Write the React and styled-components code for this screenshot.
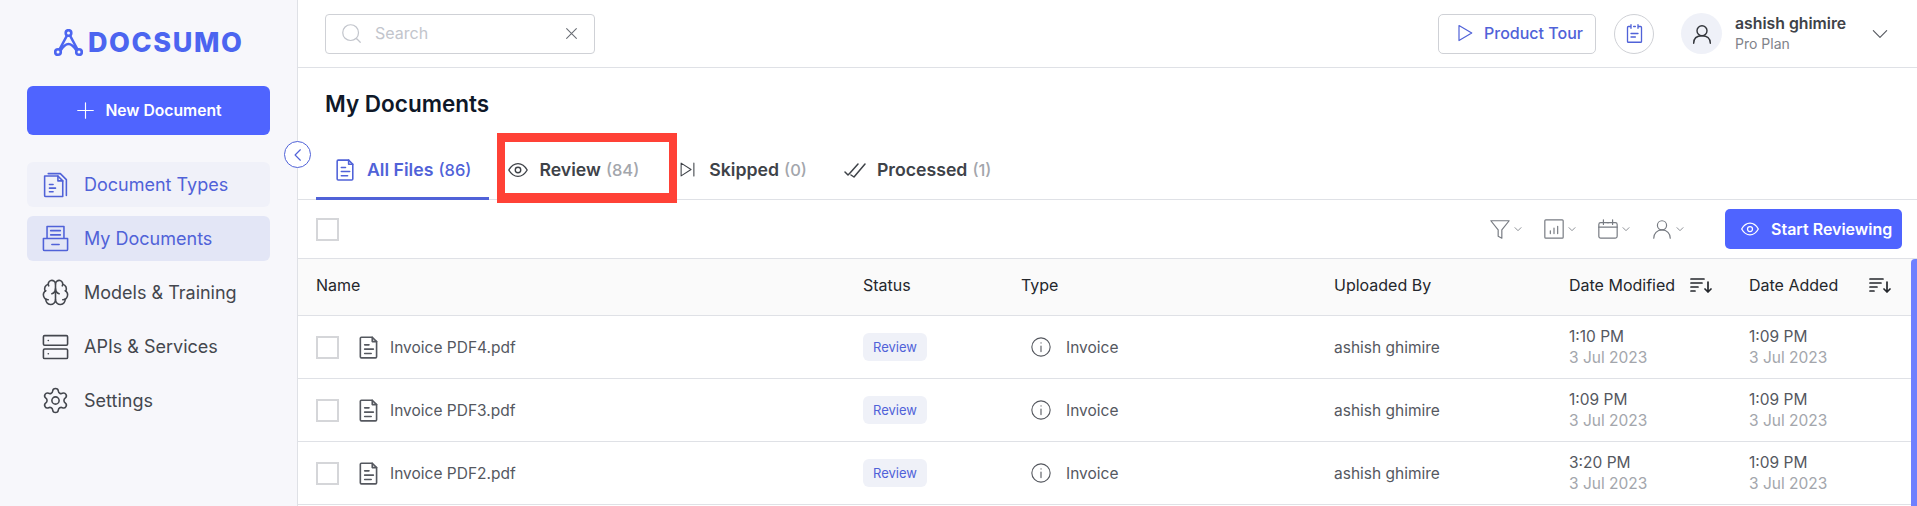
import React from "react";
import styled, { createGlobalStyle } from "styled-components";
import { Brain, Settings } from "lucide-react";

const Global = createGlobalStyle`
  html, body { margin: 0; padding: 0; background: #fff; height: 506px; overflow: hidden; }
  body { font-family: Inter, "Liberation Sans", sans-serif; color: #3e4248; }
  * { box-sizing: border-box; }
`;

const Shell = styled.div`display: flex; width: 1917px; height: 506px; overflow: hidden;`;
const Sidebar = styled.aside`
  width: 298px; flex: none; background: #f7f7fb; border-right: 1px solid #dfe1e6;
  padding: 29px 27px 0; display: flex; flex-direction: column; position: relative;
`;
const Logo = styled.div`
  display: flex; align-items: center; gap: 5px; height: 28px; padding-left: 27px; color: #4c65f0;
`;
const LogoText = styled.span`
  font: 800 27px/28px Inter, sans-serif; letter-spacing: 1.6px;
`;
const NewButton = styled.button`
  margin-top: 29px; height: 49px; width: 243px; border: 0; border-radius: 6px; background: #4f64ff; color: #fff;
  font: 600 15.7px Inter, sans-serif; display: flex; align-items: center; justify-content: center; gap: 11px; padding: 0 0 0 2px;
`;
const Nav = styled.nav`margin-top: 27px; display: flex; flex-direction: column; gap: 9px;`;
const NavItem = styled.div`
  height: 45px; border-radius: 6px; display: flex; align-items: center; gap: 14px; padding-left: 14px;
  font-size: 18px; font-weight: 400;
  color: ${p => (p.$state ? "#5062d8" : "#44474e")};
  background: ${p => (p.$state === "active" ? "#e3e6f6" : p.$state === "soft" ? "#f0f1f9" : "transparent")};
`;
const Collapse = styled.button`
  position: absolute; left: 284px; top: 141px; width: 27px; height: 27px; border-radius: 50%; padding: 0;
  background: #fff; border: 1px solid #5062d8; color: #5062d8; display: flex; align-items: center; justify-content: center;
`;

const Main = styled.main`flex: 1; min-width: 0; display: flex; flex-direction: column; position: relative;`;
const Topbar = styled.header`
  height: 68px; flex: none; border-bottom: 1px solid #dfe1e6; display: flex; align-items: center;
  padding: 0 29px 0 27px; gap: 18px;
`;
const Search = styled.div`
  width: 270px; height: 40px; border: 1px solid #cfd1d6; border-radius: 4px; display: flex; align-items: center;
  padding: 0 16px 1px 15px; color: #c2c5cc; font-size: 16px; gap: 13px; margin-right: auto;
`;
const SearchLabel = styled.span`flex: 1;`;
const ClearIcon = styled.span`display: flex; color: #6b6f76;`;
const TourButton = styled.button`
  width: 158px; height: 40px; border: 1px solid #cfd1d6; border-radius: 5px; background: #fff; color: #5062d8;
  font: 500 16px Inter, sans-serif; display: flex; align-items: center; gap: 10px; padding: 0 0 1px 17px;
`;
const RoundIcon = styled.div`
  width: 40px; height: 40px; border-radius: 50%; border: 1px solid #cfd1d6; color: #5062d8;
  display: flex; align-items: center; justify-content: center;
`;
const User = styled.div`display: flex; align-items: center; margin-left: 9px;`;
const Avatar = styled.div`
  width: 41px; height: 41px; border-radius: 50%; background: #eff1f8; color: #33363c;
  display: flex; align-items: center; justify-content: center; margin-right: 13px;
`;
const UserText = styled.div`display: flex; flex-direction: column; width: 137px;`;
const UserName = styled.span`font-size: 15.8px; font-weight: 600; line-height: 20px; color: #3e4248;`;
const UserPlan = styled.span`font-size: 14px; line-height: 20px; color: #7f838a;`;
const UserChevron = styled.span`display: flex; color: #55585f;`;

const Title = styled.h1`
  margin: 0; padding: 21px 0 0 27px; height: 65px; font-size: 22.5px; font-weight: 600; line-height: 30px; color: #0f1828; flex: none;
`;
const Tabs = styled.div`
  height: 67px; flex: none; border-bottom: 1px solid #dfe1e6; display: flex; align-items: stretch; padding-left: 18px; position: relative;
`;
const Tab = styled.div`
  display: flex; align-items: center; gap: ${p => p.$gap || 9}px; padding: 9px 18px 0 ${p => p.$pad || 17}px; height: 67px; font-size: 17.7px; font-weight: 600;
  color: ${p => (p.$active ? "#5062d8" : "#3e4248")};
  border-bottom: 3px solid ${p => (p.$active ? "#5062d8" : "transparent")};
`;
const TabLabel = styled.span`display: flex; align-items: baseline; gap: 5px;`;
const Count = styled.span`
  font-size: 16.5px; font-weight: 500; color: ${p => (p.$active ? "#5062d8" : "#a3a6ac")};
`;
const Highlight = styled.div`
  position: absolute; left: 199px; top: 0; width: 180px; height: 70px; border: solid #ff4136;
  border-width: 9px 8px 10px; pointer-events: none;
`;
const Toolbar = styled.div`
  height: 58px; flex: none; display: flex; align-items: center; padding: 0 15px 0 18px;
`;
const Check = styled.span`
  width: 23px; height: 23px; flex: none; border: 2px solid #d5d6d9; display: block; background: #fff;
`;
const Tools = styled.div`margin-left: auto; display: flex; align-items: center; gap: 21px; margin-right: 41px;`;
const Tool = styled.div`display: flex; align-items: center; gap: 3px; color: #777b82;`;
const StartButton = styled.button`
  width: 177px; height: 40px; border: 0; border-radius: 5px; background: #4f64ff; color: #fff; font: 600 16px Inter, sans-serif;
  display: flex; align-items: center; gap: 11px; padding: 0 0 0 15px;
`;
const GridRow = styled.div`
  display: grid; grid-template-columns: 547px 158px 313px 235px 180px 1fr; align-items: center; padding-left: 18px;
  border-top: ${p => (p.$header ? "1px solid #dfe1e6" : "0")};
  border-bottom: 1px solid #dfe1e6; height: ${p => (p.$header ? "58px" : "63px")};
  padding-bottom: ${p => (p.$header ? "5px" : "0")};
  background: ${p => (p.$header ? "#fafafa" : "#fff")};
  font-size: 16px; color: ${p => (p.$header ? "#24272c" : "#55585f")};
`;
const HeadCell = styled.div`display: flex; align-items: center; font-weight: 400; gap: ${p => p.$gap || 0}px; color: #24272c;`;
const NameCell = styled.div`display: flex; align-items: center; font-size: 15.5px;`;
const FileIcon = styled.span`display: flex; margin: 0 8px 0 17px; color: #55585f;`;
const Pill = styled.span`
  width: 64px; height: 28px; border-radius: 6px; background: #eff1f8; color: #5062d8; font-size: 13px;
  display: flex; align-items: center; justify-content: center;
`;
const TypeCell = styled.div`display: flex; align-items: center; gap: 14px; padding-left: 9px; font-size: 15.5px; color: #55585f;`;
const DateCell = styled.div`display: flex; flex-direction: column; line-height: 21px; font-size: 15.5px;`;
const DateSub = styled.span`color: #a3a6ac;`;
const Scroll = styled.div`
  position: absolute; right: 0; top: 259px; bottom: 0; width: 6px; background: #6f80ff; border-radius: 4px 0 0 0;
`;

const Svg = ({ s = 20, w, h, sw = 1.5, children, fill = "none", vb }) => (
  <svg width={w || s} height={h || s} viewBox={vb || "0 0 24 24"} fill={fill} stroke="currentColor" strokeWidth={sw} strokeLinecap="round" strokeLinejoin="round">{children}</svg>
);
const Doc = (p) => <Svg {...p}><path d="M5 3h10l4 4v14a1 1 0 0 1-1 1H5a1 1 0 0 1-1-1V4a1 1 0 0 1 1-1z" /><path d="M15 3v4h4M8 10h4M8 14h8M8 18h6" /></Svg>;
const Eye = (p) => <Svg {...p}><path d="M2 12c2.5-4.5 6-7 10-7s7.5 2.5 10 7c-2.5 4.5-6 7-10 7s-7.5-2.5-10-7z" /><circle cx="12" cy="12" r="3" /></Svg>;
const Person = (p) => <Svg {...p}><circle cx="12" cy="8" r="5" /><path d="M3 22c0-5 3.5-9 9-9s9 4 9 9" /></Svg>;
const Chev = ({ s = 8 }) => <Svg s={s} sw={2.5}><path d="M3 8l9 9 9-9" /></Svg>;
const SortI = () => (
  <Svg w={23} h={16} vb="0 0 23 16" sw={1.7}><path d="M1 2h13M1 6h11M1 10h7M1 14h4M18 5v10M15 12l3 3 3-3" /></Svg>
);

const rows = [
  ["Invoice PDF4.pdf", "1:10 PM"],
  ["Invoice PDF3.pdf", "1:09 PM"],
  ["Invoice PDF2.pdf", "3:20 PM"],
];

export default function App() {
  return (
    <Shell>
      <Global />
      <Sidebar>
        <Logo>
          <svg width="29" height="28" viewBox="0 0 29 28" fill="none" stroke="currentColor" strokeWidth="2.6">
            <circle cx="14.5" cy="4" r="2.8" /><circle cx="4" cy="23" r="2.8" /><circle cx="25" cy="23" r="2.8" />
            <path d="M13 6.5L5.5 20.5M16 6.5l7.5 14M6.5 21.5c3-4.5 5-6.5 8-6.5s5 2 8 6.5" />
          </svg>
          <LogoText>DOCSUMO</LogoText>
        </Logo>
        <NewButton>
          <Svg s={17} sw={1.6}><path d="M12 1v22M1 12h22" /></Svg>
          New Document
        </NewButton>
        <Nav>
          <NavItem $state="soft">
            <Svg s={29} sw={1.3}><path d="M3 5h11l4 4v13H4a1 1 0 0 1-1-1V5z" /><path d="M14 5v4h4M7 12h3M7 15h5M7 18h3M6 3h10l5 5v13" /></Svg>
            Document Types
          </NavItem>
          <NavItem $state="active">
            <Svg s={29} sw={1.3}><path d="M5 2h14v10H5zM2 12h20v9a1 1 0 0 1-1 1H3a1 1 0 0 1-1-1zM8 5.5h8M8 9h8M9 17h6" /></Svg>
            My Documents
          </NavItem>
          <NavItem>
            <Brain size={29} strokeWidth={1.3} />
            Models & Training
          </NavItem>
          <NavItem>
            <Svg s={29} sw={1.3}><rect x="2" y="3" width="20" height="8" rx="1" /><rect x="2" y="14" width="20" height="8" rx="1" /><path d="M6 7h.1M6 18h.1" /></Svg>
            APIs & Services
          </NavItem>
          <NavItem>
            <Settings size={29} strokeWidth={1.3} />
            Settings
          </NavItem>
        </Nav>
        <Collapse aria-label="Collapse">
          <Svg s={14} sw={2}><path d="M16 3L7 12l9 9" /></Svg>
        </Collapse>
      </Sidebar>
      <Main>
        <Topbar>
          <Search>
            <Svg s={21} sw={1.4}><circle cx="11" cy="11" r="9" /><path d="M18 18l4 4" /></Svg>
            <SearchLabel>Search</SearchLabel>
            <ClearIcon><Svg s={13} sw={2}><path d="M3 3l18 18M21 3L3 21" /></Svg></ClearIcon>
          </Search>
          <TourButton>
            <Svg s={18} sw={1.6}><path d="M4 2l17 10L4 22z" /></Svg>
            Product Tour
          </TourButton>
          <RoundIcon>
            <Svg s={21} sw={1.5}><path d="M8 4H5a1 1 0 0 0-1 1v16a1 1 0 0 0 1 1h14a1 1 0 0 0 1-1V5a1 1 0 0 0-1-1h-3M8 2v4M16 2v4M11 4h2M8 12h8M8 16h5" /></Svg>
          </RoundIcon>
          <User>
            <Avatar><Svg s={20} sw={1.7}><circle cx="12" cy="8" r="6" /><path d="M2 23c0-6 4-9 10-9s10 3 10 9" /></Svg></Avatar>
            <UserText>
              <UserName>ashish ghimire</UserName>
              <UserPlan>Pro Plan</UserPlan>
            </UserText>
            <UserChevron><Svg s={16} sw={1.7}><path d="M2 7l10 10L22 7" /></Svg></UserChevron>
          </User>
        </Topbar>
        <Title>My Documents</Title>
        <Tabs>
          <Tab $active><Doc s={25} /><TabLabel>All Files<Count $active>(86)</Count></TabLabel></Tab>
          <Tab $pad={18} $gap={10}><Eye s={22} /><TabLabel>Review<Count>(84)</Count></TabLabel></Tab>
          <Tab $pad={22} $gap={13}><Svg s={17}><path d="M3 3l14 9-14 9zM21 3v18" /></Svg><TabLabel>Skipped<Count>(0)</Count></TabLabel></Tab>
          <Tab $pad={19} $gap={11}><Svg w={22} h={16} vb="0 0 22 16"><path d="M1 10l3 3 2-2M7 13l3 2M10 15L21 2M6 11l8-9" /></Svg><TabLabel>Processed<Count>(1)</Count></TabLabel></Tab>
          <Highlight />
        </Tabs>
        <Toolbar>
          <Check />
          <Tools>
            <Tool>
              <Svg s={22} sw={1.3}><path d="M2 3h20l-8 10v9l-4-2v-7z" /></Svg><Chev />
            </Tool>
            <Tool>
              <Svg s={22} sw={1.3}><rect x="2" y="2" width="20" height="20" rx="1" /><path d="M8 17v-3M12 17v-6M16 17V9" /></Svg><Chev />
            </Tool>
            <Tool>
              <Svg s={22} sw={1.3}><rect x="2" y="5" width="20" height="17" rx="2" /><path d="M2 10h20M7 2v5M17 2v5M11 5h2" /></Svg><Chev />
            </Tool>
            <Tool>
              <Person s={22} sw={1.3} /><Chev />
            </Tool>
          </Tools>
          <StartButton><Eye s={20} />Start Reviewing</StartButton>
        </Toolbar>
        <GridRow $header>
          <HeadCell>Name</HeadCell>
          <HeadCell>Status</HeadCell>
          <HeadCell>Type</HeadCell>
          <HeadCell>Uploaded By</HeadCell>
          <HeadCell $gap={15}>Date Modified <SortI /></HeadCell>
          <HeadCell $gap={31}>Date Added <SortI /></HeadCell>
        </GridRow>
        {rows.map(([name, time]) => (
          <GridRow key={name}>
            <NameCell><Check /><FileIcon><Doc s={26} /></FileIcon>{name}</NameCell>
            <div><Pill>Review</Pill></div>
            <TypeCell>
              <Svg s={22} sw={1.2}><circle cx="12" cy="12" r="10" /><path d="M12 11v6M12 7.5h.1" /></Svg>
              Invoice
            </TypeCell>
            <NameCell>ashish ghimire</NameCell>
            <DateCell>{time}<DateSub>3 Jul 2023</DateSub></DateCell>
            <DateCell>1:09 PM<DateSub>3 Jul 2023</DateSub></DateCell>
          </GridRow>
        ))}
        <Scroll />
      </Main>
    </Shell>
  );
}
